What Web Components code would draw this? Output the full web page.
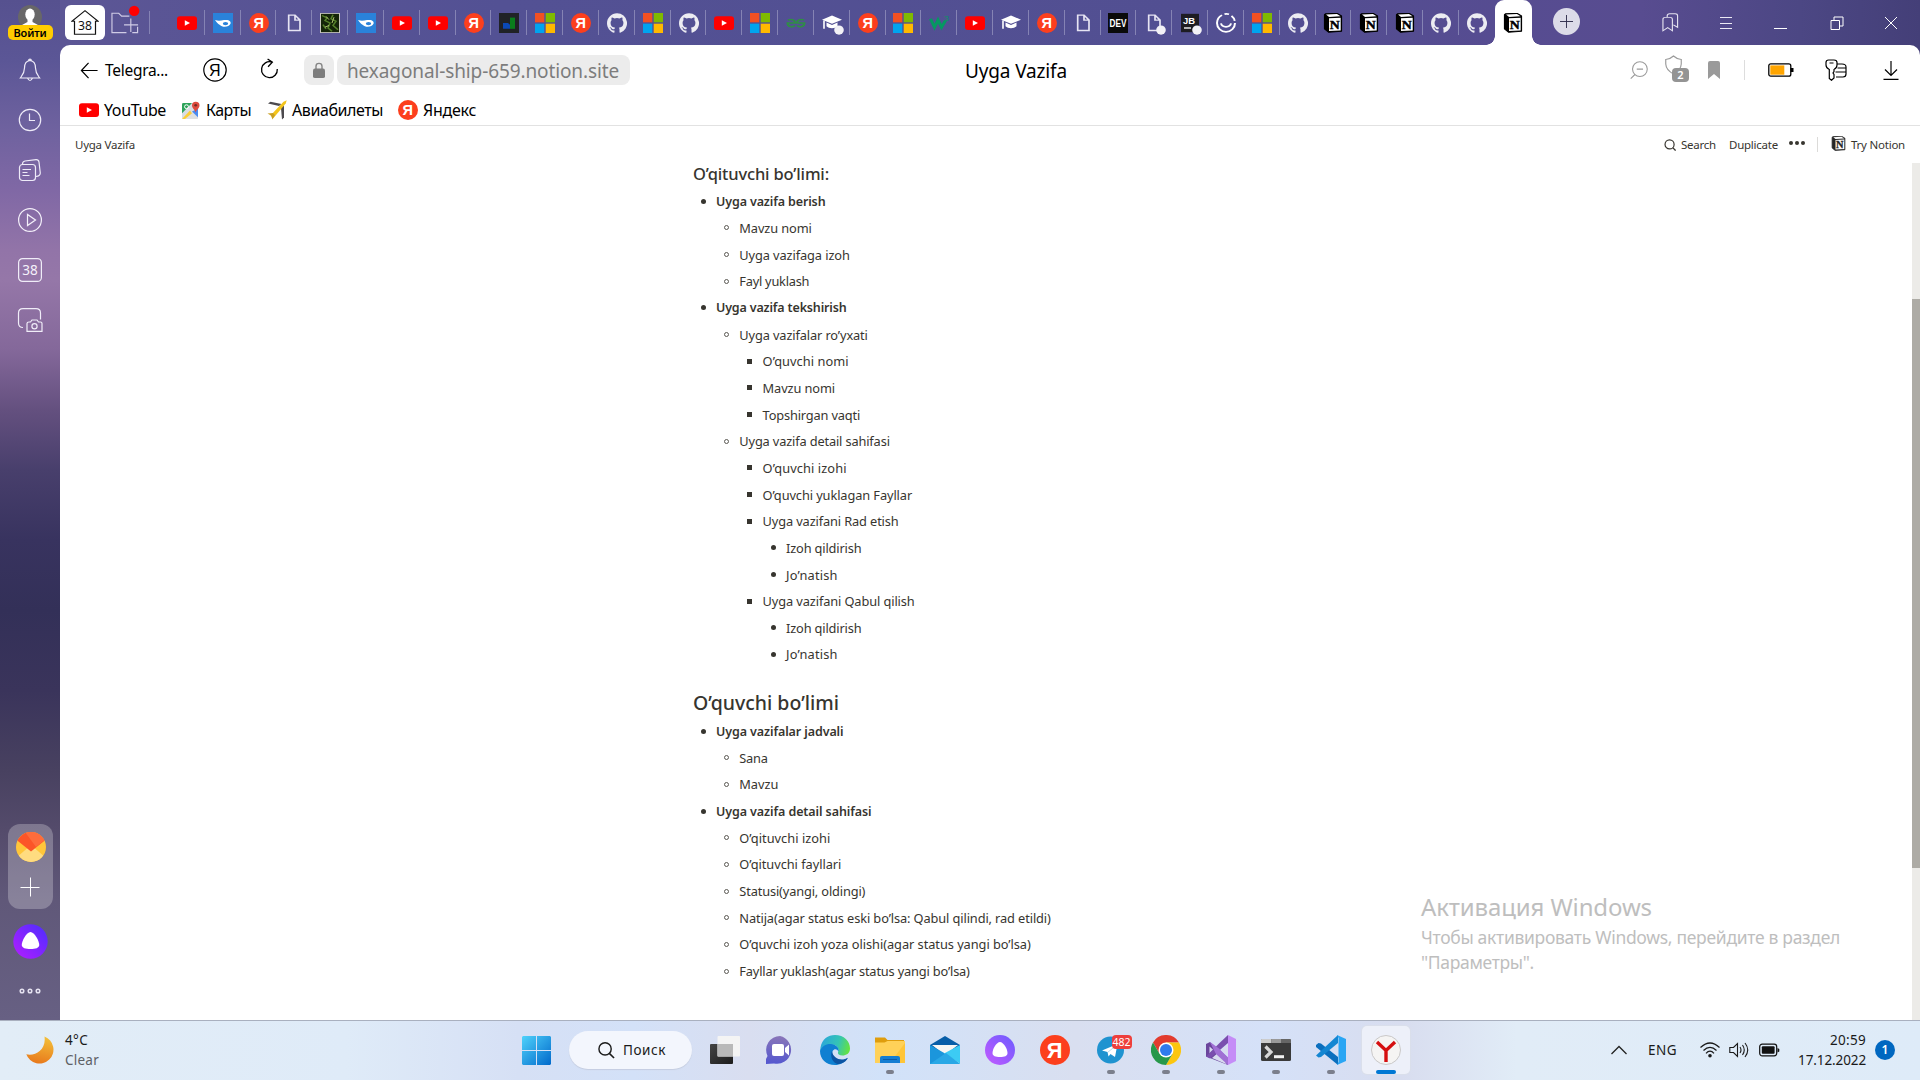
<!DOCTYPE html>
<html lang="ru">
<head>
<meta charset="utf-8">
<title>Uyga Vazifa</title>
<style>
html,body{margin:0;padding:0;width:1920px;height:1080px;overflow:hidden;background:#fff}
body{font-family:"Noto Sans","Open Sans",sans-serif;color:#000}
</style>
</head>
<body>
<desk-top></desk-top>
<script>
const svg = (vb, body, extra = '') => `<svg viewBox="${vb}" fill="none" preserveAspectRatio="none" ${extra}>${body}</svg>`;
const notion = svg('0 0 20 24', '<path d="M2.500 1 14 .3 18.500 3.500V22L5.500 23 1.500 19V2Z" fill="#000" stroke="#000" stroke-width="1.200" stroke-linejoin="round"/><path d="M3 1.800 14 1.100 17.500 4 6 4.700Z" fill="#fff"/><path d="M6 6.300 17.700 5.600V20.900L6 21.700Z" fill="#fff"/><text x="11.800" y="18.700" text-anchor="middle" font-family="Liberation Serif" font-weight="bold" font-size="15.500" textLength="10" lengthAdjust="spacingAndGlyphs" fill="#000" stroke="#000" stroke-width=".5">N</text>');
const hat = '<path d="M0 8 10 3 20 8 10 13Z" fill="#fff"/><path d="M4.500 11.500V16C7 19 13 19 15.500 16V11.500L10 14.300Z" fill="#fff"/><path d="M2 9V19" stroke="#fff" stroke-width="1.600"/>';
const doc = '<path d="M4.700 2.500H11L16 8.500V21H4.700Z M11 2.500V8.500H16" stroke="#e6e4f3" stroke-width="1.700"/>';
const dot = '<ellipse cx="17" cy="20.500" rx="4.800" ry="5.500" fill="#f2f1f6"/>';
const ya = svg('0 0 24 24', '<circle cx="12" cy="12" r="12" fill="#fc3f1d"/><text x="11.600" y="18.200" text-anchor="middle" font-family="Liberation Sans" font-weight="bold" font-size="17.500" fill="#fff">Я</text>');
const ICONS = {
  youtube: svg('0 0 20 24', '<rect y="3.800" width="20" height="16.600" rx="3" ry="3.500" fill="#f00"/><path d="M7.800 8.800V15.200L13 12Z" fill="#fff"/>'),
  swoosh: svg('0 0 20 24', '<rect width="20" height="24" fill="#2a82da"/><path d="M2 8.500C6 10 8 9 11 8.500 16 7.500 18.500 10 17.500 13 16 17.500 9 17.500 7 14.500 4.500 13 3.500 11 2 8.500Z" fill="#fff"/><ellipse cx="12.500" cy="12.700" rx="2.700" ry="1.900" fill="#2a82da"/>'),
  ya, notion,
  doc: svg('0 0 20 24', doc),
  docdot: svg('0 0 20 24', doc + dot, 'overflow="visible"'),
  forest: svg('0 0 20 24', '<rect x=".5" y=".5" width="19" height="23" fill="#142408" stroke="#c9c8bf"/><path d="M2 3 7 6 5 9 10 12 8 18 12 22M13 2 11 7 16 10 13 15 18 20M3 14 6 19" stroke="#55802a" stroke-width="1.600"/><path d="M6 4 9 8M14 5 12 12M5 17 9 15" stroke="#b9cd75"/>'),
  blocks: svg('0 0 20 24', '<rect width="20" height="24" fill="#202226"/><path d="M11 5.500H16V19H11Z" fill="#0a7d1c"/><path d="M4 12H9L11 14V19H4Z" fill="#0b49b5"/>'),
  ms: svg('0 0 20 24', '<path d="M0 0H9.300V11.200H0Z" fill="#f25022"/><path d="M10.700 0H20V11.200H10.700Z" fill="#7fba00"/><path d="M0 12.800H9.300V24H0Z" fill="#00a4ef"/><path d="M10.700 12.800H20V24H10.700Z" fill="#ffb900"/>'),
  github: svg('0 0 24 24', '<path fill="#ececf2" d="M12 .3C5.400.3 0 5.600 0 12.300c0 5.300 3.400 9.800 8.200 11.400.6.100.8-.3.800-.6v-2.200c-3.300.7-4-1.400-4-1.400-.6-1.400-1.400-1.800-1.400-1.800-1-.7.100-.7.100-.7 1.200.1 1.800 1.200 1.800 1.200 1.100 1.800 2.800 1.300 3.500 1 .1-.8.400-1.300.8-1.600-2.700-.3-5.500-1.300-5.500-5.900 0-1.300.5-2.400 1.300-3.200-.2-.4-.6-1.600.1-3.200 0 0 1-.3 3.300 1.200a11.500 11.500 0 0 1 6 0C17.300 5 18.300 5.300 18.300 5.300c.7 1.600.2 2.800.1 3.200.8.800 1.300 1.900 1.300 3.200 0 4.600-2.800 5.600-5.500 5.900.5.400.8 1.100.8 2.200v3.300c0 .3.200.7.800.6A12 12 0 0 0 12 .3"/>'),
  gfg: svg('0 0 20 24', '<g stroke="#2f8d46" stroke-width="2"><path d="M2 8.500C5 7 9 8 9 12H1.500C1.500 16.500 6 18 9 15M18 8.500C15 7 11 8 11 12H18.500C18.500 16.500 14 18 11 15"/></g>'),
  hat: svg('0 0 20 24', hat),
  hatdot: svg('0 0 20 24', hat + dot, 'overflow="visible"'),
  w3: svg('0 0 20 24', '<path d="M1.500 7 5.500 17 9 8.500 12.500 17 16.500 9" stroke="#059862" stroke-width="3.200"/><text x="15" y="10" font-size="9" font-family="Liberation Sans" fill="#059862">3</text>', 'overflow="visible"'),
  dev: svg('0 0 20 24', '<rect width="20" height="24" fill="#0a0a0a"/><text x="1.500" y="16.700" font-size="13" textLength="17" lengthAdjust="spacingAndGlyphs" font-family="Liberation Sans" font-weight="bold" fill="#fff">DEV</text>', 'overflow="visible"'),
  jb: svg('0 0 20 24', '<rect x="1" y="1" width="18" height="22" fill="#1d1c22"/><text x="3" y="13" font-size="11" font-family="Liberation Sans" font-weight="bold" fill="#fff" textLength="12" lengthAdjust="spacingAndGlyphs">JB</text><path d="M4 18H11" stroke="#fff" stroke-width="1.600"/>' + dot, 'overflow="visible"'),
  smile: svg('0 0 20 24', '<path d="M6 2.500A9.500 11 0 0 0 1 12A9 10.700 0 0 0 19 12M8.500 1.300A9 10.700 0 0 1 13 1.500M15.500 3.500A9 10 0 0 1 18.700 9.500" stroke="#fff" stroke-width="2"/><path d="M5 12.500C6 18 14 18 15 12.500" stroke="#fff" stroke-width="2"/>'),
  house: svg('0 0 28 32', '<path d="M3.500 31V14.500H.8L14 1 27.200 14.500H24.500V31Z" stroke="#111" stroke-width="1.200"/><text x="14" y="25" text-anchor="middle" font-family="Noto Sans" font-size="15" textLength="14" lengthAdjust="spacingAndGlyphs" fill="#111">38</text>'),
  folder: svg('0 0 30 28', '<path d="M16 26.500H1V6.500H8L11 9.500H19M27.500 20.500V26.500H22M20.500 12V26M13.500 18.500H28" stroke="#d0cce6" stroke-width="1.200"/><circle cx="24" cy="4" r="5.400" fill="#f00"/>', 'overflow="visible"'),
  bookmarks: svg('0 0 18 24', '<path d="M1 22.500V8Q1 5.500 3.500 5.500H8.500Q11 5.500 11 8V22.500L6 18.500ZM5.500 5V3.500Q5.500 1 8 1H14Q16.500 1 16.500 3.500V18L12 15" stroke="#e5e3f0" stroke-width="1.200"/>'),
  menu: svg('0 0 14 14', '<path d="M1 1.500H13M1 7.500H13M1 12.500H13" stroke="#eceaf5"/>'),
  minimize: svg('0 0 14 14', '<path d="M0 12.500H13" stroke="#fff"/>'),
  restore: svg('0 0 14 14', '<path d="M1 4.500H9.500V13.500H1ZM4 4V1H13V10H10" stroke="#fff"/>'),
  close: svg('0 0 14 14', '<path d="M1 1 13 13M13 1 1 13" stroke="#fff"/>'),
  plus: svg('0 0 14 14', '<path d="M7 0V14M0 7H14" stroke="#2c2a4a"/>'),
  back: svg('0 0 20 20', '<path d="M9 2 1.500 10 9 18M1.500 10H18.500" stroke="#000" stroke-width="1.300"/>'),
  yaround: svg('0 0 24 24', '<circle cx="12" cy="12" r="11.200" stroke="#000" stroke-width="1.200"/><text x="11.800" y="17.600" text-anchor="middle" font-family="Liberation Sans" font-size="16" fill="#000">Я</text>'),
  reload: svg('0 0 20 24', '<path d="M12.500 4.500A8.300 8.700 0 1 0 18.200 12M8 1 13 4.500 8.500 9.500" stroke="#000" stroke-width="1.400"/>'),
  lock: svg('0 0 12 18', '<path d="M3 8V4.500Q3 1.500 6 1.500T9 4.500V8" stroke="#858585" stroke-width="1.400"/><rect y="7" width="12" height="10" rx="2" fill="#7d7d7d"/>'),
  maps: svg('0 0 18 20', '<rect y="2" width="16" height="17" rx="1.500" fill="#d9dde3"/><path d="M0 13 10 2H1.500Q0 2 0 3.500Z" fill="#2da35a"/><path d="M1 19 9 11 16 19Z" fill="#dfe0e0"/><path d="M0 19 8 10 10 13 3 19Z" fill="#fbcd36"/><path d="M10 11 16 17V8Z" fill="#4a8bf0"/><circle cx="4.500" cy="6" r="2" stroke="#fff"/><path d="M13.500 12C13 9 10 8 10 4.500A3.700 3.700 0 0 1 17.500 4.500C17.500 8 14.500 9 13.500 12Z" fill="#dd4b3e"/><circle cx="13.700" cy="4.500" r="1.400" fill="#762a23"/>'),
  plane: svg('0 0 20 20', '<path d="M12 6 1 3.500 3.500 1.700 14.500 4Z" fill="#4c4a4e"/><path d="M14 8 15 19.500 17 17.500 17 5.500Z" fill="#4c4a4e"/><path d="M3.500 15.500 16.500 1.800 19.700.3 18.700 3.500 6.500 18Z" fill="#f3c41c"/><path d="M6 13 .5 13.500 4 15.500 5.500 19.500 8 15Z" fill="#c99f22"/>'),
  zoomout: svg('0 0 20 20', '<circle cx="11" cy="9" r="8.200" stroke="#9b9b9b" stroke-width="1.200"/><path d="M7.500 9H14.500M5.500 15 .8 19.500" stroke="#9b9b9b" stroke-width="1.200"/>'),
  shield: svg('0 0 16 20', '<path d="M8 1Q11 4 15.300 4.500V9Q15 15 8 19Q1 15 .7 9V4.500Q5 4 8 1Z" stroke="#9b9b9b" stroke-width="1.100"/>'),
  mark: svg('0 0 12 18', '<path d="M0 18V2Q0 0 2 0H10Q12 0 12 2V18L6 13Z" fill="#9a9a9a"/>'),
  battery: svg('0 0 26 14', '<rect x=".8" y=".8" width="22" height="12.400" rx="2" stroke="#000" stroke-width="1.300"/><rect x="2.300" y="2.400" width="14" height="9.300" fill="#ffa500"/><path d="M24 5V9" stroke="#000" stroke-width="3"/>'),
  key: svg('0 0 22 22', '<path d="M6.500 21.300 4.300 19.500V10.500Q1 9 1 6V3.500Q1 1 3.500 1H9Q12 1 12 3.500V6Q12 9 9 10.500V12.500L8 14 9 15.500V19ZM4.500 4H8.500M12 5H17Q21 5 21 8V15Q21 18 18 18H11M12.500 9H21M10.500 13H21" stroke="#000" stroke-width="1.200"/>'),
  download: svg('0 0 16 20', '<path d="M8 1V15.500M2 9.500 8 15.500 14 9.500M.5 19.300H15.500" stroke="#000" stroke-width="1.200"/>'),
  find: svg('0 0 14 14', '<circle cx="6.500" cy="6.300" r="5.300" stroke="#37352f" stroke-width="1.400"/><path d="M10.200 10 13.500 13.500" stroke="#37352f" stroke-width="1.500"/>'),
  dots: svg('0 0 16 4', '<g fill="#37352f"><circle cx="2" cy="2" r="2"/><circle cx="8" cy="2" r="2"/><circle cx="14" cy="2" r="2"/></g>'),
  avatar: svg('0 0 24 24', '<circle cx="12" cy="12" r="12" fill="#686768"/><ellipse cx="12" cy="9.500" rx="4.700" ry="6" fill="#fff"/><path d="M9.500 13H14.500V17L20 20 12 24 4 20 9.500 17Z" fill="#fff"/>'),
  bell: svg('0 0 24 24', '<g stroke="#eeebf8" stroke-width="1.200"><path d="M12 2.500C7.500 3 6.500 6.500 6.500 10 6.500 15 4.500 17 2.300 20H21.700C19.500 17 17.500 15 17.500 10 17.500 6.500 16.500 3 12 2.500ZM10.700 2.400A1.300 1.300 0 0 1 13.300 2.400M9.500 20Q12 25 14.500 20"/></g>'),
  clock: svg('0 0 24 24', '<g stroke="#eeebf8" stroke-width="1.200"><circle cx="12" cy="12" r="10.700"/><path d="M11.500 5.500V12.500H17"/></g>'),
  docs: svg('0 0 24 24', '<g stroke="#eeebf8" stroke-width="1.200"><rect x="1.500" y="6.500" width="16" height="16" rx="3"/><path d="M4.500 6Q4.500 3.500 7 3L18 1.700Q20.500 1.500 21 4L22.300 15Q22.300 18 18 18.500M4.500 11.500H13M4.500 14.500H9.500M4.500 17.500H11.500"/></g>'),
  play: svg('0 0 24 24', '<g stroke="#f4f0fa" stroke-width="1.200"><circle cx="12" cy="12" r="11.400"/><path d="M9.500 6.500V17.500L17.500 12Z"/></g>'),
  count: svg('0 0 24 24', '<rect x=".6" y=".6" width="22.800" height="22.800" rx="4" stroke="#f0edf8" stroke-width="1.200"/><text x="12" y="17.300" text-anchor="middle" font-size="14.500" textLength="15.500" lengthAdjust="spacingAndGlyphs" font-family="Noto Sans" font-weight="400" fill="#f4f1fa">38</text>'),
  camera: svg('0 0 26 24', '<g stroke="#f0edf8" stroke-width="1.200"><path d="M6 19.500Q1.500 19.500 1.500 15V5Q1.500.7 6 .7H19Q23.500.7 23.500 5V11.500"/><path d="M10 15.500Q10 14 12 14H13.500L15 12H20L21.500 14H23.500Q25 14 25 15.500V23.300H10Z"/><circle cx="17.500" cy="18.300" r="2.600"/></g>'),
  mailball: svg('0 0 30 30', '<defs><clipPath id="c"><circle cx="15" cy="15" r="15"/></clipPath></defs><g clip-path="url(#c)"><path d="M0 0H30V30H0Z" fill="#ffc63a"/><path d="M0 26 15 13 30 26V30H0Z" fill="#ffdc80"/><path d="M0 7.500 15 19.500 30 7.500V0H0Z" fill="#fc5528"/><path d="M9 0 30 0V7L20 15Z" fill="#ff7c48" opacity=".6"/></g>'),
  sideplus: svg('0 0 20 20', '<path d="M10.500 .5V19.500M.5 10.500H19.500" stroke="#fff"/>'),
  alice: svg('0 0 36 36', '<defs><linearGradient id="a" x1="1" y1="0" x2="0" y2="1"><stop offset=".15" stop-color="#5a2bff"/><stop offset="1" stop-color="#b51dff"/></linearGradient></defs><circle cx="18" cy="18" r="17.700" fill="url(#a)"/><path d="M18 8.300C22 8.300 27 17.500 27 21.500 27 24.500 23 25.700 18 25.700S9 24.500 9 21.500C9 17.500 14 8.300 18 8.300Z" fill="#fff"/>'),
  alice2: svg('0 0 30 30', '<defs><linearGradient id="a" x1="1" y1="0" x2="0" y2="1"><stop offset="0" stop-color="#6a5cff"/><stop offset="1" stop-color="#c45aff"/></linearGradient></defs><circle cx="15" cy="15" r="15" fill="url(#a)"/><path d="M15 7C18.500 7 22.500 14 22.500 18 22.500 21 19.500 22 15 22S7.500 21 7.500 18C7.500 14 11.500 7 15 7Z" fill="#fff"/>'),
  more: svg('0 0 22 6', '<g stroke="#e5e2f0" stroke-width="1.500"><circle cx="3" cy="3" r="1.800"/><circle cx="11" cy="3" r="1.800"/><circle cx="19" cy="3" r="1.800"/></g>'),
  moon: svg('0 0 28 28', '<defs><linearGradient id="m" x1=".7" y1="0" x2=".5" y2="1"><stop stop-color="#f3c03a"/><stop offset="1" stop-color="#e87a1c"/></linearGradient></defs><path d="M18.500.5A14 14 0 1 1 .3 18.300C9 20.500 20.500 14 18.500.5Z" fill="url(#m)"/>'),
  start: svg('0 0 29 29', '<defs><linearGradient id="s" gradientUnits="userSpaceOnUse" x1="0" y1="0" x2="29" y2="29"><stop stop-color="#4fd2fb"/><stop offset="1" stop-color="#0169cb"/></linearGradient></defs><path d="M1 0H14V14H0V1ZM15 0H28L29 1V14H15ZM0 15H14V29H1L0 28ZM15 15H29V28L28 29H15Z" fill="url(#s)"/>'),
  taskfind: svg('0 0 18 18', '<circle cx="7.500" cy="7.300" r="6.500" stroke="#1b1b1b" stroke-width="1.500"/><path d="M12 12 17 17" stroke="#1b1b1b" stroke-width="1.700"/>'),
  taskview: svg('0 0 30 30', '<defs><linearGradient id="t" x1="0" y1="0" x2="1" y2="1"><stop stop-color="#444"/><stop offset="1" stop-color="#1c1c1c"/></linearGradient></defs><rect y="9" width="23" height="20" rx="1" fill="url(#t)"/><rect x="7.500" y="1" width="22.500" height="20.500" rx="1" fill="#f4f4f4"/><rect x="7.500" y="9" width="15.500" height="12.500" fill="#b9b9b9"/>'),
  meet: svg('0 0 30 30', '<defs><linearGradient id="v" x1=".6" y1="0" x2=".5" y2="1"><stop stop-color="#8a76b8"/><stop offset="1" stop-color="#5558cf"/></linearGradient></defs><path d="M15 1A14 14 0 1 1 9 28.500L1 29V24L2.500 21A14 14 0 0 1 15 1Z" fill="url(#v)"/><rect x="7" y="9" width="12" height="12" rx="2" fill="#fff"/><path d="M20 13 24 9.500V20.500L20 17Z" fill="#fff"/>'),
  edge: svg('0 0 30 30', '<defs><linearGradient id="e" x1="0" y1=".3" x2="1" y2=".5"><stop stop-color="#2aa5dc"/><stop offset=".6" stop-color="#34c4b5"/><stop offset="1" stop-color="#63e243"/></linearGradient></defs><path d="M.5 12.500C2 4 8 0 15 0 24 0 30 6 30 13.500 30 18.500 26 20.500 22.500 20.500 19 20.500 17.500 19 18 17.500 20 13 16 9.500 11.500 9.500 6 9.500 2 12.500 0 17Z" fill="url(#e)"/><path d="M0 16C2 11 6 8.700 11 9 16.500 9.500 19.500 13 18.500 16.500 16 12 11 15 12.500 20 14 25.500 21 27 27.500 23 25 27.500 20 30 15 30 6 30 0 24 0 16Z" fill="#0f80d2"/><path d="M12 16C9 23 15 31 21 28.500 24.500 27.500 27 25 28 22.700 22 26.500 13 24 12 16Z" fill="#0c54a3"/>'),
  explorer: svg('0 0 30 30', '<path d="M0 5V2.500H10L12.500 5H29V12H0Z" fill="#df9d0d"/><path d="M0 7.500H9.500L12.500 6H30V28H0Z" fill="#ffd158"/><path d="M30 8V28H15Z" fill="#ffbd22" opacity=".6"/><path d="M5 28V23Q5 21 7 21H23Q25 21 25 23V28Z" fill="#147ed3"/><path d="M8 24.500H22" stroke="#0b5ba8"/>'),
  mail: svg('0 0 30 30', '<path d="M0 10 15 1 30 10V20H0Z" fill="#085ea8"/><path d="M2 10H28L15 20Z" fill="#f6f6f4"/><path d="M0 10 16 19 30 29H0Z" fill="#1b96dc"/><path d="M30 10V28.500L14 18.500Z" fill="#3ccbf4"/><path d="M0 29 16 18 30 29Z" fill="#29a8e6"/>'),
  telegram: svg('0 0 30 30', '<circle cx="14.500" cy="15" r="13.500" fill="#1f93d0"/><path d="M6 15.500 21.500 9 19 22 14.500 19 12.500 21.500 11.500 17Z" fill="#fff"/><path d="M12 17 19 11.500" stroke="#b8d9ec"/>'),
  chrome: svg('0 0 30 30', '<path d="M2 7.500A15 15 0 0 1 28 7.500H15L8.500 18.700Z" fill="#e23b2e"/><path d="M28 7.500A15 15 0 0 1 15 30L21.500 18.700 15 7.500Z" fill="#fcc60f"/><path d="M15 30A15 15 0 0 1 2 7.500L8.500 18.700 21.500 18.700Z" fill="#27984a"/><circle cx="15" cy="15" r="7.500" fill="#fff"/><circle cx="15" cy="15" r="6" fill="#2f7bed"/>'),
  vs: svg('0 0 30 30', '<path d="M0 9 4 7 20 22 22 30 0 21.500Z" fill="#6b459c"/><path d="M3.500 11.500V18.500L7.500 15Z" fill="#d7daef"/><path d="M0 21.500 4 23.500 22 8V0L13 8.500Z" fill="#7a4fae"/><path d="M4 7 13 13.500 22 22.500V30L11 20Z" fill="#a070d4"/><path d="M6 23 13 17 18 21.500 20 29Z" fill="#d8dcef"/><path d="M22 0 30 4V26L22 30Z" fill="#c58cf7"/><path d="M22 9.500V20.500L15 15Z" fill="#d8dcef"/><path d="M4 7 22 22.500V30L10 19Z" fill="#a070d4"/>'),
  terminal: svg('0 0 30 30', '<rect y="4" width="30" height="22" rx="1.500" fill="#3a3a3a"/><path d="M0 8V5Q0 4 1 4H10.500V8Z" fill="#ccc"/><path d="M10.500 4H20V8H10.500Z" fill="#999"/><path d="M20 4H29L30 5V8H20Z" fill="#666"/><path d="M4.500 11.500 10 17 4.500 22.500" stroke="#d8d8d8" stroke-width="3.200"/><path d="M13 21.700H23" stroke="#f2f2f2" stroke-width="3"/>'),
  vscode: svg('0 0 30 30', '<path d="M0 10 2.500 8 5 8.500 22 22V30L0 12Z" fill="#0b6fbe"/><path d="M0 20.500 22 0V8L5 22 2.500 22.500 0 20.500Z" fill="#1486d2"/><path d="M21 0 30 4V26L21 30 22.500 27V3Z" fill="#2aa6f4"/>'),
  yb: svg('0 0 30 30', '<circle cx="15" cy="15" r="14.500" fill="#f5f4f3" stroke="#c9c8c8"/><path d="M6 7 15 15.500 24 7M15 15V27" stroke="#d50f10" stroke-width="3.400"/>'),
  chevron: svg('0 0 16 10', '<path d="M.5 9 8 1.500 15.500 9" stroke="#222" stroke-width="1.300"/>'),
  wifi: svg('0 0 20 16', '<g stroke="#1a1a1a" stroke-width="1.200"><path d="M.5 5.500Q10-3.500 19.500 5.500M3.500 8.500Q10 2 16.500 8.500M6 11.300Q10 7 14 11.300"/></g><circle cx="10" cy="13.700" r="1.800" fill="#1a1a1a"/>'),
  sound: svg('0 0 20 16', '<path d="M.8 5.500H4.500L8.500 1.500V14.500L4.500 10.500H.8ZM11 5Q13 8 11 11M13.500 3Q17 8 13.500 13M16 1Q21.500 8 16 15" stroke="#1a1a1a" stroke-width="1.100"/>'),
  power: svg('0 0 21 14', '<rect x=".7" y="1.200" width="17" height="11.600" rx="2.500" stroke="#111" stroke-width="1.200"/><rect x="2.800" y="3.300" width="12.800" height="7.500" rx="1" fill="#111"/><path d="M18.500 5 20.300 6V8.500L18.500 9.500Z" fill="#111"/>')
};

const define = (name, html, after) => {
  const tpl = document.createElement('template');
  tpl.innerHTML = html;
  customElements.define(name, class extends HTMLElement {
    connectedCallback() {
      if (this.shadowRoot) return;
      this.attachShadow({mode: 'open'}).append(tpl.content.cloneNode(true));
      if (after) after(this, this.shadowRoot);
    }
  });
};

/* Icon in a w × h box */
define('ui-icon', '<style>:host{display:block;flex:none}svg{display:block;width:100%;height:100%}</style><div id="b" style="height:100%"></div>', (el, root) => {
  el.style.width = el.getAttribute('w') + 'px';
  el.style.height = (el.getAttribute('h') || el.getAttribute('w')) + 'px';
  root.getElementById('b').innerHTML = ICONS[el.getAttribute('name')] || '';
});

/* One line of text tracked to a given width */
define('fit-text', '<style>:host{display:block;flex:none;white-space:pre}span{display:inline-block}</style><span><slot></slot></span>', (el, root) => {
  const w = +el.getAttribute('w');
  const span = root.querySelector('span');
  const n = el.textContent.length;
  const natural = span.getBoundingClientRect().width;
  if (natural && n > 1) span.style.letterSpacing = ((w - natural) / n).toFixed(3) + 'px';
  el.style.width = w + 'px';
});

const TABS = 'youtube swoosh ya doc forest swoosh youtube youtube ya blocks ms ya github ms github youtube ms gfg hatdot ya ms w3 youtube hat ya doc dev docdot jb smile ms github notion notion notion github github'.split(' ');
define('browser-tab', `<style>
:host{display:flex;box-sizing:border-box;width:35.840px;height:45px;flex:none;align-items:center;justify-content:center;position:relative}
:host::after{content:"";position:absolute;right:0;top:10px;width:1px;height:25px;background:#8583b4}
:host([last])::after{display:none}
:host([active]){width:37px;background:#fff;border-radius:9px 9px 0 0}
:host([active])::after,:host([active])::before{content:"";position:absolute;top:auto;bottom:0;width:9px;height:9px}
:host([active])::after{right:-9px;background:radial-gradient(circle at 100% 0,transparent 8.500px,#fff 9px)}
:host([active])::before{left:-9px;background:radial-gradient(circle at 0 0,transparent 8.500px,#fff 9px)}
</style><slot></slot>`);

define('tab-strip', `<style>
:host{display:flex;height:45px;flex:none;align-items:center}
.home{width:40px;height:35px;margin-left:5px;border-radius:6px;background:#fff;display:flex;align-items:center;justify-content:center}
.sep{width:1px;height:23px;background:#8583b4;margin:0 19px 0 9px}
.add{width:27px;height:27px;border-radius:50%;background:#dcdbe8;display:flex;align-items:center;justify-content:center;margin:0 82px 2px 21px}
.tabs{display:flex;width:1363px}
</style>
<div class="home"><ui-icon name="house" w="28" h="25"></ui-icon></div>
<ui-icon name="folder" w="29" h="27" style="margin-left:6px;margin-top:-4px"></ui-icon><div class="sep"></div>
<div class="tabs"></div>
<div class="add"><ui-icon name="plus" w="13"></ui-icon></div>
<ui-icon name="bookmarks" w="17" h="19" style="margin-right:40px"></ui-icon>
<ui-icon name="menu" w="14" h="14" style="margin-right:41px"></ui-icon>
<ui-icon name="minimize" w="14" h="14" style="margin-right:42px;margin-top:0"></ui-icon>
<ui-icon name="restore" w="14" h="14" style="margin-right:40px"></ui-icon>
<ui-icon name="close" w="14" h="14"></ui-icon>`, (el, root) => {
  root.querySelector('.tabs').innerHTML = TABS.map((t, i) =>
    `<browser-tab ${i === TABS.length - 1 ? 'last' : ''}><ui-icon name="${t}" w="20" h="20"></ui-icon></browser-tab>`).join('') +
    '<browser-tab active><ui-icon name="notion" w="20" h="20"></ui-icon></browser-tab>';
});

define('side-bar', `<style>
:host{display:flex;flex-direction:column;align-items:center;width:60px;flex:none;height:1020px}
.who{height:45px;width:60px;display:flex;flex-direction:column;align-items:center}
.who ui-icon{margin-top:5px}
.login{position:relative;z-index:1;margin-top:-4px;width:45px;height:15px;border-radius:5px;background:#fc0;color:#000;font-weight:600;font-size:11px;line-height:15px;display:flex;justify-content:center}
.slot{height:50px;display:flex;align-items:center}
.panel{margin-top:479px;width:45px;height:85px;border-radius:12px;background:rgba(255,255,255,.25);display:flex;flex-direction:column;align-items:center}
</style>
<div class="who"><ui-icon name="avatar" w="24"></ui-icon><div class="login"><fit-text w="33">Войти</fit-text></div></div>
<div class="slot"><ui-icon name="bell" w="24"></ui-icon></div>
<div class="slot"><ui-icon name="clock" w="24"></ui-icon></div>
<div class="slot"><ui-icon name="docs" w="24"></ui-icon></div>
<div class="slot"><ui-icon name="play" w="24"></ui-icon></div>
<div class="slot"><ui-icon name="count" w="24"></ui-icon></div>
<div class="slot"><ui-icon name="camera" w="26" h="24"></ui-icon></div>
<div class="panel"><ui-icon name="mailball" w="30" style="margin-top:8px;margin-left:1px"></ui-icon><ui-icon name="sideplus" w="20" style="margin-top:15px"></ui-icon></div>
<ui-icon name="alice" w="35" style="margin-top:15px;margin-left:1px"></ui-icon>
<ui-icon name="more" w="22" h="6" style="margin-top:29px"></ui-icon>`);

define('tool-bar', `<style>
:host{display:block;border-bottom:1px solid #e2e2e2;height:80px;flex:none}
.row{display:flex;align-items:center;height:50px}
.row.b{height:30px;font-size:16px}
.pill{height:30px;border-radius:8px;background:#ececec;display:flex;align-items:center;box-sizing:border-box}
.sh{position:relative;margin-left:17px;width:24px;height:30px}
.badge{position:absolute;left:7px;top:13px;width:17px;height:14px;border-radius:4px;background:#949494;color:#fff;font-size:11px;font-weight:600;line-height:14px;text-align:center}
</style>
<div class="row">
<ui-icon name="back" w="19" style="margin-left:20px"></ui-icon>
<fit-text w="63" style="font-size:15.500px;margin-left:6px;margin-top:-1px">Telegra...</fit-text>
<ui-icon name="yaround" w="24" style="margin-left:35px"></ui-icon>
<ui-icon name="reload" w="19" h="22" style="margin-left:33px;margin-top:-2px"></ui-icon>
<div class="pill" style="width:30px;margin-left:25px;justify-content:center"><ui-icon name="lock" w="12" h="17"></ui-icon></div>
<div class="pill" style="width:293px;margin-left:3px;padding-left:10px"><fit-text w="272" style="font-size:19px;color:#7d7d7d;margin-top:2px">hexagonal-ship-659.notion.site</fit-text></div>
<fit-text w="102" style="font-size:19px;margin-left:335px;margin-top:2px">Uyga Vazifa</fit-text>
<ui-icon name="zoomout" w="18" style="margin-left:563px"></ui-icon>
<div class="sh"><ui-icon name="shield" w="17" h="20"></ui-icon><div class="badge">2</div></div>
<ui-icon name="mark" w="12" h="18" style="margin-left:19px"></ui-icon>
<div style="width:1px;height:20px;background:#ddd;margin-left:24px"></div>
<ui-icon name="battery" w="26" h="14" style="margin-left:23px"></ui-icon>
<ui-icon name="key" w="22" h="22" style="margin-left:31px"></ui-icon>
<ui-icon name="download" w="16" h="20" style="margin-left:36px"></ui-icon>
</div>
<div class="row b">
<ui-icon name="youtube" w="20" h="20" style="margin-left:19px"></ui-icon><fit-text w="62" style="margin-left:5px">YouTube</fit-text>
<ui-icon name="maps" w="18" h="19" style="margin-left:16px"></ui-icon><fit-text w="45" style="margin-left:6px">Карты</fit-text>
<ui-icon name="plane" w="20" style="margin-left:16px"></ui-icon><fit-text w="91" style="margin-left:5px">Авиабилеты</fit-text>
<ui-icon name="ya" w="20" style="margin-left:15px"></ui-icon><fit-text w="53" style="margin-left:5px">Яндекс</fit-text>
</div>`);

define('page-header', `<style>
:host{display:flex;align-items:center;height:37px;flex:none;color:#37352f;font-size:11.500px}
</style>
<fit-text w="60" style="margin-left:15px">Uyga Vazifa</fit-text>
<ui-icon name="find" w="12" style="margin-left:1529px"></ui-icon>
<fit-text w="35" style="margin-left:5px">Search</fit-text>
<fit-text w="49" style="margin-left:13px">Duplicate</fit-text>
<ui-icon name="dots" w="16" h="4" style="margin-left:11px;margin-top:-3px"></ui-icon>
<div style="width:1px;height:15px;background:#dcdbd9;margin-left:12px"></div>
<ui-icon name="notion" w="15" h="15" style="margin-left:13px;opacity:.85;margin-top:-2px"></ui-icon>
<fit-text w="54" style="margin-left:5px">Try Notion</fit-text>`);

/* Bulleted line; level sets the indent and the marker */
define('note-item', `<style>
:host{display:flex;align-items:center;height:26.670px;font-size:12.800px;--in:0px}
i{display:block;flex:none;box-sizing:border-box;width:5px;height:5px;border-radius:50%;background:#37352f;margin:0 10.500px 0 calc(7.500px + var(--in))}
:host([level="2"]){--in:23.300px}:host([level="3"]){--in:46.600px}:host([level="4"]){--in:70px}
:host([level="2"]) i{background:none;border:1px solid #5b5953}
:host([level="3"]) i{border-radius:0}
:host([bold]){font-weight:600;font-size:12.500px}
</style><i></i><slot></slot>`);

const A = [[1,'Uyga vazifa berish',109.500],[2,'Mavzu nomi',72.500],[2,'Uyga vazifaga izoh',110.500],[2,'Fayl yuklash',70],[1,'Uyga vazifa tekshirish',130.500],[2,'Uyga vazifalar ro’yxati',128.500],[3,'O’quvchi nomi',86],[3,'Mavzu nomi',72.500],[3,'Topshirgan vaqti',97.500],[2,'Uyga vazifa detail sahifasi',150.500],[3,'O’quvchi izohi',84],[3,'O’quvchi yuklagan Fayllar',149.500],[3,'Uyga vazifani Rad etish',136],[4,'Izoh qildirish',75.500],[4,'Jo’natish',51.500],[3,'Uyga vazifani Qabul qilish',152],[4,'Izoh qildirish',75.500],[4,'Jo’natish',51.500]];
const B = [[1,'Uyga vazifalar jadvali',127.500],[2,'Sana',28.500],[2,'Mavzu',39],[1,'Uyga vazifa detail sahifasi',155.500],[2,'O’qituvchi izohi',91],[2,'O’qituvchi fayllari',102],[2,'Statusi(yangi, oldingi)',126],[2,'Natija(agar status eski bo’lsa: Qabul qilindi, rad etildi)',311.500],[2,'O’quvchi izoh yoza olishi(agar status yangi bo’lsa)',291.500],[2,'Fayllar yuklash(agar status yangi bo’lsa)',230.500]];
const rows = list => list.map(([l, t, w]) => `<note-item level="${l}" ${l === 1 ? 'bold' : ''}><fit-text w="${w}">${t}</fit-text></note-item>`).join('');
define('note-page', `<style>
:host{display:flex;flex:1;min-height:0;color:#37352f}
main{flex:1;padding-left:633px;display:flex;flex-direction:column}
h2,h3{margin:0;font-weight:500;display:flex;align-items:center}
h3{font-size:16.500px;height:21px;padding-bottom:4px}
h2{font-size:19.500px;height:30px;margin-top:20px}
aside{width:8px;background:#ecebe8;display:flex;flex-direction:column}
aside div{margin-top:136px;height:569px;background:#adaba5}
</style><main>
<h3><fit-text w="136">O’qituvchi bo’limi:</fit-text></h3>${rows(A)}
<h2><fit-text w="146">O’quvchi bo’limi</fit-text></h2>${rows(B)}
</main><aside><div></div></aside>`);

define('win-watermark', `<style>
:host{display:block;position:absolute;left:1421px;top:889px;color:#bebebe;font-size:17.500px}
fit-text{height:25px;line-height:25px}
</style>
<fit-text w="231" style="font-size:24px;height:36px;line-height:36px">Активация Windows</fit-text>
<fit-text w="419">Чтобы активировать Windows, перейдите в раздел</fit-text>
<fit-text w="113">"Параметры".</fit-text>`);

define('task-app', `<style>
:host{display:flex;box-sizing:border-box;width:48px;height:48px;margin-right:7.080px;flex:none;align-items:center;justify-content:center;position:relative;border-radius:5px}
:host([open])::after{content:"";position:absolute;left:20px;bottom:0;width:8px;height:4px;border-radius:2px;background:#7b7f8c}
:host([active]){background:#edf0f9;box-shadow:0 0 0 1px #dadfeb}
:host([active])::after{left:14px;width:20px;background:#0078d4}
b{position:absolute;right:3px;top:9px;width:20px;height:14px;border-radius:4px;background:#ee3f3c;color:#fff;font-weight:400;font-size:10.500px;line-height:14px;text-align:center}
b:empty{display:none}
</style><slot></slot><b></b>`, (el, root) => { root.querySelector('b').textContent = el.getAttribute('badge') || ''; });

const APPS = [['taskview'],['meet'],['edge'],['explorer',1],['mail'],['alice2'],['ya'],['telegram',1,'482'],['chrome',1],['vs',1],['terminal',1],['vscode',1],['yb',2]];
define('task-bar', `<style>
:host{display:flex;align-items:center;box-sizing:border-box;height:60px;flex:none;border-top:1px solid #a9b0bf;padding-bottom:1px;font-size:13.500px;color:#1a1a1a;
background:linear-gradient(90deg,#e2edf7 0,#dfebf8 18%,#d6e0f5 27%,#d3e1f8 33%,#d9def0 39%,#d1e2f9 46%,#d9dff0 56%,#d5e1f8 66%,#d8ddef 73%,#e1ecf7 79%,#deebf8 100%)}
.col{display:flex;flex-direction:column;line-height:20px;margin-top:-1px}
.find{width:123px;height:38px;border-radius:19px;background:#f3f6fd;box-shadow:0 1px 1px #c5cde0;display:flex;align-items:center;margin:0 9px 0 18px}
.apps{display:flex}
.n{width:20px;height:20px;border-radius:50%;background:#0067c0;color:#fff;font-size:12px;font-weight:600;line-height:20px;text-align:center;margin-left:9px}
</style>
<ui-icon name="moon" w="28" style="margin-left:26px"></ui-icon>
<div class="col" style="margin-left:11px;width:60px"><fit-text w="23">4°C</fit-text><fit-text w="34" style="color:#5d6065">Clear</fit-text></div>
<ui-icon name="start" w="29" style="margin-left:397px"></ui-icon>
<div class="find"><ui-icon name="taskfind" w="17" style="margin-left:29px"></ui-icon><fit-text w="43" style="margin-left:8px">Поиск</fit-text></div>
<div class="apps">${APPS.map(([n, o, b]) => `<task-app ${o ? 'open' : ''} ${o === 2 ? 'active' : ''} ${b ? `badge="${b}"` : ''}><ui-icon name="${n}" w="30"></ui-icon></task-app>`).join('')}</div>
<ui-icon name="chevron" w="16" h="10" style="margin-left:194px"></ui-icon>
<fit-text w="29" style="margin-left:21px">ENG</fit-text>
<ui-icon name="wifi" w="20" h="16" style="margin-left:23px"></ui-icon>
<ui-icon name="sound" w="20" h="16" style="margin-left:9px"></ui-icon>
<ui-icon name="power" w="21" h="14" style="margin-left:10px"></ui-icon>
<div class="col" style="margin-left:18px;align-items:flex-end"><fit-text w="36">20:59</fit-text><fit-text w="68">17.12.2022</fit-text></div>
<div class="n">1</div>`);

define('desk-top', `<style>
:host{display:flex;flex-direction:column;width:1920px;height:1080px;position:relative}
.win{display:flex;height:1020px;flex:none;background:linear-gradient(90deg,transparent 60px,#5c5695 60px,#535194 500px,#524f92 1200px,#564c91 1500px,#584c90 1640px,#4c4784 1800px,#443f78) 0 0/1920px 56px no-repeat,
linear-gradient(180deg,#56518f 0,#5b5696 60px,#6f629f 130px,#8068a5 190px,#9274a8 250px,#9577a8 280px,#84689a 350px,#64507f 410px,#483f6c 470px,#38335f 540px,#333058 610px,#3a345b 690px,#484160 770px,#544b6b 830px,#605879 900px,#676083 1020px)}
.main{display:flex;flex-direction:column;flex:1}
.view{display:flex;flex-direction:column;flex:1;min-height:0;background:#fff;border-radius:10px 10px 0 0;overflow:hidden}
</style>
<div class="win"><side-bar></side-bar><div class="main"><tab-strip></tab-strip><div class="view"><tool-bar></tool-bar><page-header></page-header><note-page></note-page></div></div></div>
<task-bar></task-bar><win-watermark></win-watermark>`);
</script>
</body>
</html>
